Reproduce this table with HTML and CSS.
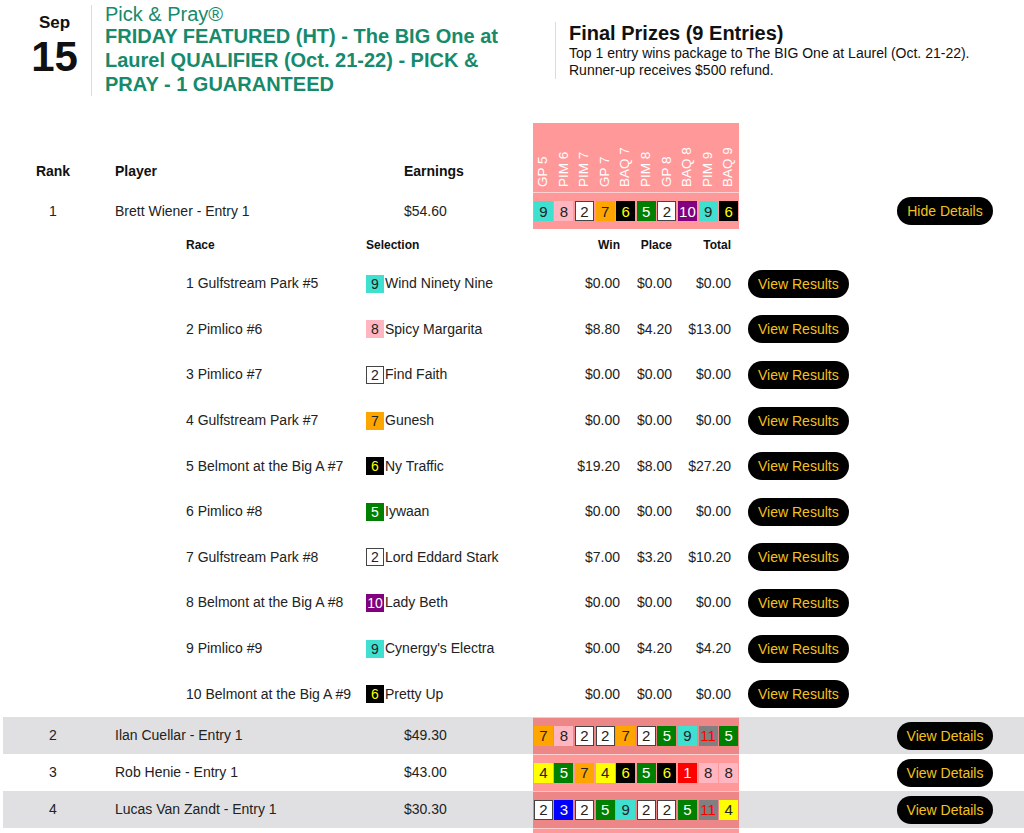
FILE: index.html
```html
<!DOCTYPE html>
<html>
<head>
<meta charset="utf-8">
<link rel="stylesheet" href="styles.css">
</head>
<body>
<div class="page">
  <header class="top">
    <div class="date">
      <div class="month">Sep</div>
      <div class="day">15</div>
    </div>
    <div class="title">
      <div class="brand">Pick &amp; Pray®</div>
      <h1 class="contest">FRIDAY FEATURED (HT) - The BIG One at Laurel QUALIFIER (Oct. 21-22) - PICK &amp; PRAY - 1 GUARANTEED</h1>
    </div>
    <div class="prizes">
      <h2 class="prizes-title">Final Prizes (9 Entries)</h2>
      <p class="prizes-text">Top 1 entry wins package to The BIG One at Laurel (Oct. 21-22).<br>Runner-up receives $500 refund.</p>
    </div>
  </header>

  <table class="board">
    <colgroup>
      <col class="c-rank"><col class="c-player"><col class="c-earn"><col class="c-races"><col><col class="c-act">
    </colgroup>
    <thead>
      <tr>
        <th class="rank">Rank</th>
        <th class="player">Player</th>
        <th class="earn">Earnings</th>
        <th class="races-head">
          <div class="labels">
            <span class="lbl">GP 5</span><span class="lbl">PIM 6</span><span class="lbl">PIM 7</span><span class="lbl">GP 7</span><span class="lbl">BAQ 7</span><span class="lbl">PIM 8</span><span class="lbl">GP 8</span><span class="lbl">BAQ 8</span><span class="lbl">PIM 9</span><span class="lbl">BAQ 9</span>
          </div>
        </th>
        <th></th>
        <th></th>
      </tr>
    </thead>
    <tbody>
      <tr class="row">
        <td class="rank">1</td>
        <td class="player">Brett Wiener - Entry 1</td>
        <td class="earn">$54.60</td>
        <td class="races">
          <div class="picks">
            <span class="pc"><span class="box n9">9</span></span><span class="pc"><span class="box n8">8</span></span><span class="pc"><span class="box n2">2</span></span><span class="pc"><span class="box n7">7</span></span><span class="pc"><span class="box n6">6</span></span><span class="pc"><span class="box n5">5</span></span><span class="pc"><span class="box n2">2</span></span><span class="pc"><span class="box n10">10</span></span><span class="pc"><span class="box n9">9</span></span><span class="pc"><span class="box n6">6</span></span>
          </div>
        </td>
        <td></td>
        <td class="act"><button class="btn">Hide Details</button></td>
      </tr>
      <tr class="detail">
        <td colspan="6">
          <div class="dgrid">
            <div class="dh">Race</div><div class="dh">Selection</div><div class="dh num">Win</div><div class="dh num">Place</div><div class="dh num">Total</div><div class="dh"></div>

            <div class="dc">1 Gulfstream Park #5</div><div class="dc sel"><span class="sb n9">9</span>Wind Ninety Nine</div><div class="dc num">$0.00</div><div class="dc num">$0.00</div><div class="dc num">$0.00</div><div class="dc bcell"><button class="btn">View Results</button></div>

            <div class="dc">2 Pimlico #6</div><div class="dc sel"><span class="sb n8">8</span>Spicy Margarita</div><div class="dc num">$8.80</div><div class="dc num">$4.20</div><div class="dc num">$13.00</div><div class="dc bcell"><button class="btn">View Results</button></div>

            <div class="dc">3 Pimlico #7</div><div class="dc sel"><span class="sb n2">2</span>Find Faith</div><div class="dc num">$0.00</div><div class="dc num">$0.00</div><div class="dc num">$0.00</div><div class="dc bcell"><button class="btn">View Results</button></div>

            <div class="dc">4 Gulfstream Park #7</div><div class="dc sel"><span class="sb n7">7</span>Gunesh</div><div class="dc num">$0.00</div><div class="dc num">$0.00</div><div class="dc num">$0.00</div><div class="dc bcell"><button class="btn">View Results</button></div>

            <div class="dc">5 Belmont at the Big A #7</div><div class="dc sel"><span class="sb n6">6</span>Ny Traffic</div><div class="dc num">$19.20</div><div class="dc num">$8.00</div><div class="dc num">$27.20</div><div class="dc bcell"><button class="btn">View Results</button></div>

            <div class="dc">6 Pimlico #8</div><div class="dc sel"><span class="sb n5">5</span>Iywaan</div><div class="dc num">$0.00</div><div class="dc num">$0.00</div><div class="dc num">$0.00</div><div class="dc bcell"><button class="btn">View Results</button></div>

            <div class="dc">7 Gulfstream Park #8</div><div class="dc sel"><span class="sb n2">2</span>Lord Eddard Stark</div><div class="dc num">$7.00</div><div class="dc num">$3.20</div><div class="dc num">$10.20</div><div class="dc bcell"><button class="btn">View Results</button></div>

            <div class="dc">8 Belmont at the Big A #8</div><div class="dc sel"><span class="sb n10">10</span>Lady Beth</div><div class="dc num">$0.00</div><div class="dc num">$0.00</div><div class="dc num">$0.00</div><div class="dc bcell"><button class="btn">View Results</button></div>

            <div class="dc">9 Pimlico #9</div><div class="dc sel"><span class="sb n9">9</span>Cynergy's Electra</div><div class="dc num">$0.00</div><div class="dc num">$4.20</div><div class="dc num">$4.20</div><div class="dc bcell"><button class="btn">View Results</button></div>

            <div class="dc">10 Belmont at the Big A #9</div><div class="dc sel"><span class="sb n6">6</span>Pretty Up</div><div class="dc num">$0.00</div><div class="dc num">$0.00</div><div class="dc num">$0.00</div><div class="dc bcell"><button class="btn">View Results</button></div>
          </div>
        </td>
      </tr>
      <tr class="row alt">
        <td class="rank">2</td>
        <td class="player">Ilan Cuellar - Entry 1</td>
        <td class="earn">$49.30</td>
        <td class="races">
          <div class="picks">
            <span class="pc"><span class="box n7">7</span></span><span class="pc"><span class="box n8">8</span></span><span class="pc"><span class="box n2">2</span></span><span class="pc"><span class="box n2">2</span></span><span class="pc"><span class="box n7">7</span></span><span class="pc"><span class="box n2">2</span></span><span class="pc"><span class="box n5">5</span></span><span class="pc"><span class="box n9">9</span></span><span class="pc"><span class="box n11">11</span></span><span class="pc"><span class="box n5">5</span></span>
          </div>
        </td>
        <td></td>
        <td class="act"><button class="btn">View Details</button></td>
      </tr>
      <tr class="row">
        <td class="rank">3</td>
        <td class="player">Rob Henie - Entry 1</td>
        <td class="earn">$43.00</td>
        <td class="races">
          <div class="picks">
            <span class="pc"><span class="box n4">4</span></span><span class="pc"><span class="box n5">5</span></span><span class="pc"><span class="box n7">7</span></span><span class="pc"><span class="box n4">4</span></span><span class="pc"><span class="box n6">6</span></span><span class="pc"><span class="box n5">5</span></span><span class="pc"><span class="box n6">6</span></span><span class="pc"><span class="box n1">1</span></span><span class="pc"><span class="box n8">8</span></span><span class="pc"><span class="box n8">8</span></span>
          </div>
        </td>
        <td></td>
        <td class="act"><button class="btn">View Details</button></td>
      </tr>
      <tr class="row alt">
        <td class="rank">4</td>
        <td class="player">Lucas Van Zandt - Entry 1</td>
        <td class="earn">$30.30</td>
        <td class="races">
          <div class="picks">
            <span class="pc"><span class="box n2">2</span></span><span class="pc"><span class="box n3">3</span></span><span class="pc"><span class="box n2">2</span></span><span class="pc"><span class="box n5">5</span></span><span class="pc"><span class="box n9">9</span></span><span class="pc"><span class="box n2">2</span></span><span class="pc"><span class="box n2">2</span></span><span class="pc"><span class="box n5">5</span></span><span class="pc"><span class="box n11">11</span></span><span class="pc"><span class="box n4">4</span></span>
          </div>
        </td>
        <td></td>
        <td class="act"><button class="btn">View Details</button></td>
      </tr>
      <tr class="row">
        <td class="rank"></td>
        <td class="player"></td>
        <td class="earn"></td>
        <td class="races"><div class="picks"></div></td>
        <td></td>
        <td class="act"></td>
      </tr>
    </tbody>
  </table>
</div>
</body>
</html>
```

FILE: styles.css
```css
* { box-sizing: border-box; }

body {
  margin: 0;
  font-family: "Liberation Sans", Arial, sans-serif;
  color: #222;
  background: #fff;
}

.page {
  padding-left: 3px;
}

/* ---------- header ---------- */
.top {
  display: flex;
  align-items: flex-start;
  height: 123px;
  padding: 4px 0 0 15px;
}

.date {
  width: 73px;
  text-align: center;
  padding-top: 9px;
  font-weight: bold;
  color: #111;
}

.month {
  font-size: 17px;
  line-height: 20px;
}

.day {
  font-size: 42px;
  line-height: 48px;
}

.title {
  width: 434px;
  margin-top: 1px;
  border-left: 1px solid #dcdcdc;
  padding-left: 13px;
  color: #168a6b;
}

.brand {
  font-size: 20px;
  line-height: 19px;
}

.contest {
  margin: 0;
  font-size: 20px;
  line-height: 24px;
  font-weight: bold;
}

.prizes {
  margin-top: 18px;
  margin-left: 30px;
  border-left: 1px solid #dcdcdc;
  padding-left: 13px;
  color: #111;
}

.prizes-title {
  margin: 0;
  font-size: 20px;
  line-height: 23px;
  font-weight: bold;
}

.prizes-text {
  margin: 0;
  font-size: 14px;
  line-height: 17px;
}

/* ---------- board ---------- */
.board {
  width: 1021px;
  table-layout: fixed;
  border-collapse: separate;
  border-spacing: 0;
  font-size: 14px;
}

.c-rank { width: 100px; }
.c-player { width: 289px; }
.c-earn { width: 141px; }
.c-races { width: 206px; }
.c-act { width: 158px; }

.board th {
  height: 69px;
  padding: 0 0 12px;
  vertical-align: bottom;
  font-size: 14px;
  line-height: 17px;
  font-weight: bold;
  color: #111;
  text-align: left;
}

.board th.rank,
.board td.rank {
  text-align: center;
}

.board .player,
.board .earn {
  padding-left: 12px;
}

.board th.races-head {
  padding: 0;
  background: rgba(255, 0, 0, 0.4);
}

.labels {
  display: flex;
  height: 69px;
  padding-bottom: 5px;
}

.lbl {
  flex: 1;
  writing-mode: vertical-rl;
  transform: rotate(180deg);
  line-height: 20.6px;
  font-size: 13.5px;
  font-weight: normal;
  color: #fff;
  white-space: nowrap;
}

.row td {
  border-top: 1px solid transparent;
  padding: 4px 0;
  vertical-align: middle;
  line-height: 17px;
}

.row.alt {
  background: #e0e0e2;
}

.row td.races {
  padding: 0;
  background: rgba(255, 0, 0, 0.4);
  border-top: 1px solid rgba(255, 255, 255, 0.55);
}

.picks {
  display: flex;
  align-items: center;
}

.pc {
  flex: 1;
  display: flex;
  justify-content: center;
}

.box {
  width: 19px;
  height: 20px;
  display: flex;
  align-items: center;
  justify-content: center;
  font-size: 15px;
  line-height: 1;
  color: #222;
}

.act {
  text-align: center;
}

.btn {
  height: 28px;
  padding: 0 10px;
  border: none;
  border-radius: 14px;
  background: #000;
  color: #f3c21c;
  font-family: "Liberation Sans", Arial, sans-serif;
  font-size: 14px;
  line-height: 28px;
  white-space: nowrap;
  cursor: pointer;
}

/* saddle cloth colours */
.n1 { background: #ff0000; color: #fff; }
.n2 { background: #fff; color: #222; border: 1px solid #444; }
.n3 { background: #0000ff; color: #fff; }
.n4 { background: #ffff00; color: #222; }
.n5 { background: #008000; color: #fff; }
.n6 { background: #000; color: #ffff00; }
.n7 { background: #ffa500; color: #222; }
.n8 { background: #ffb6c1; color: #222; }
.n9 { background: #40e0d0; color: #222; }
.n10 { background: #800080; color: #fff; }
.n11 { background: #808080; color: #ff0000; }

/* ---------- detail ---------- */
.detail td {
  padding: 0 0 0 183px;
}

.dgrid {
  display: grid;
  grid-template-columns: 180px 190px 64px 52px 59px 140px;
  grid-template-rows: 32px repeat(10, 45.6px);
  align-items: center;
}

.dh {
  font-size: 12px;
  font-weight: bold;
  color: #111;
}

.dc {
  font-size: 14px;
  line-height: 17px;
}

.num {
  text-align: right;
}

.sel {
  display: flex;
  align-items: center;
}

.sb {
  width: 18px;
  height: 18px;
  margin-right: 1px;
  display: flex;
  align-items: center;
  justify-content: center;
  font-size: 14px;
  line-height: 1;
  flex: none;
}

.bcell {
  padding-left: 17px;
}
```
